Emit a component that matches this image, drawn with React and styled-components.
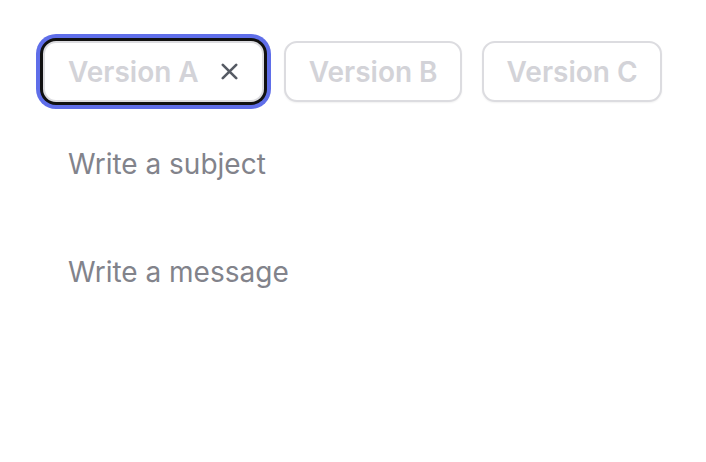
import styled, { createGlobalStyle } from "styled-components";

const GlobalStyle = createGlobalStyle`
	html, body {
		margin: 0;
		padding: 0;
		background: #ffffff;
		font-family: Inter, "Noto Sans", "Liberation Sans", sans-serif;
	}
`;

const versions = [
	{ id: "a", label: "Version A", active: true },
	{ id: "b", label: "Version B" },
	{ id: "c", label: "Version C" },
];

const CloseIcon = () => (
	<svg width="17" height="17" viewBox="0 0 17 17" fill="none">
		<path
			d="M1.8 1.8L15.2 15.2M15.2 1.8L1.8 15.2"
			stroke="#565b64"
			strokeWidth="2.6"
			strokeLinecap="round"
		/>
	</svg>
);

const App = () => {
	return (
		<Page>
			<GlobalStyle />
			<TabList>
				{versions.map((v) => (
					<Tab key={v.id} $active={v.active}>
						<TabLabel>{v.label}</TabLabel>
						{v.active && (
							<CloseButton>
								<CloseIcon />
							</CloseButton>
						)}
					</Tab>
				))}
			</TabList>
			<Form>
				<SubjectInput placeholder="Write a subject" />
				<MessageInput placeholder="Write a message" />
			</Form>
		</Page>
	);
};
export default App;

const Page = styled.div`
	width: 706px;
	height: 462px;
	box-sizing: border-box;
	padding: 41px 0 0 43px;
	display: flex;
	flex-direction: column;
`;

const TabList = styled.div`
	display: flex;
	gap: 20px;
`;

const Tab = styled.div`
	height: 61px;
	box-sizing: border-box;
	display: flex;
	align-items: center;
	padding: 0 22px 0 23px;
	border: 2px solid #dcdce0;
	border-radius: 13px;
	background: #ffffff;
	box-shadow: ${(p) =>
		p.$active
			? "0 0 0 3px #111111, 0 0 0 7px #5f6ee9"
			: "0 1px 2px rgba(0, 0, 0, 0.06)"};
`;

const TabLabel = styled.span`
	font-size: 28px;
	font-weight: 600;
	color: #d3d3d8;
`;

const CloseButton = styled.span`
	display: flex;
	align-items: center;
	margin-left: 22px;
	margin-right: 2px;
`;

const Form = styled.div`
	display: flex;
	flex-direction: column;
	padding-left: 25px;
	margin-top: 44px;
	gap: 72px;
`;

const SubjectInput = styled.input`
	border: none;
	outline: none;
	padding: 0;
	font-family: Inter, "Noto Sans", "Liberation Sans", sans-serif;
	font-size: 28px;
	line-height: 36px;
	color: #3f3f46;
	background: transparent;
	&::placeholder {
		color: #82838b;
	}
`;

const MessageInput = styled(SubjectInput)``;
